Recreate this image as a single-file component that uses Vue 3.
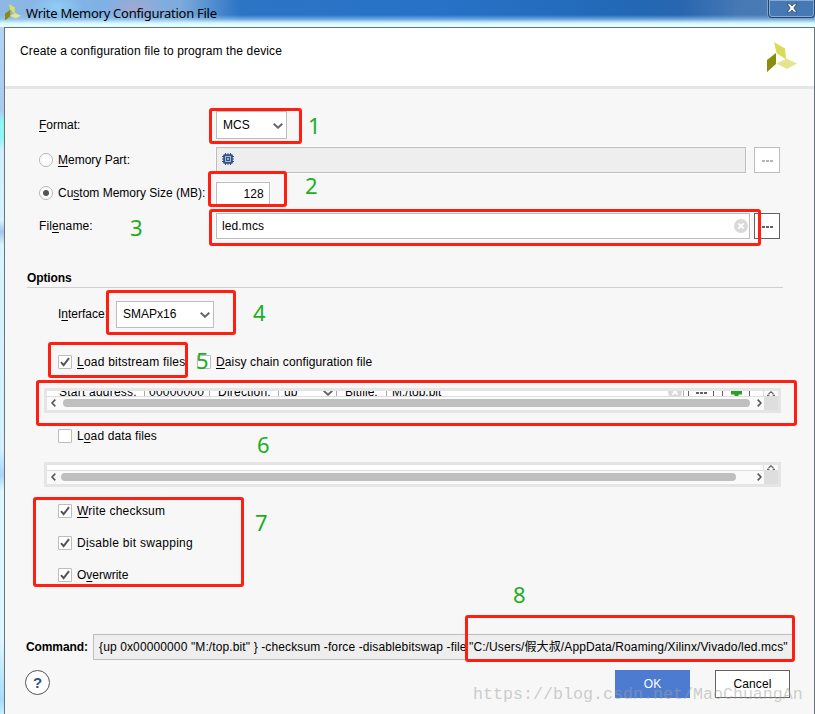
<script setup>
const checks = [
  { pre: '', key: 'W', post: 'rite checksum', cls: 'sp2' },
  { pre: 'D', key: 'i', post: 'sable bit swapping', cls: 'sp3' },
  { pre: 'O', key: 'v', post: 'erwrite', cls: '' },
]
const marks = [1, 2, 3, 4, 5, 6, 7, 8]
</script>

<template>
  <div class="window">
    <header class="titlebar">
      <svg class="mini" viewBox="0 0 30 30"><path d="M7 0l11 6 1 13-9-8z" fill="#dfdf58"/><path d="M0 18l10-7v12l-10 8z" fill="#8c8c0b"/><path d="M9 22l10-5 11 5-10 5z" fill="#e4e58f"/></svg>
      <span class="title">Write Memory Configuration File</span>
      <div class="close">
        <svg width="12" height="10" viewBox="0 0 12 10"><path d="M1 .8h3.2L6 3l1.800-2.200H11L7.800 5l3.200 4.200H7.800L6 7 4.200 9.200H1L4.200 5z" fill="#fff" stroke="#3a4a68" stroke-width=".9"/></svg>
      </div>
    </header>
    <main class="body">
      <section class="intro">
        <span class="sp1">Create a configuration file to program the device</span>
        <svg class="logo" viewBox="0 0 30 30"><path d="M7 0l11 6.500 1 11-9.500-6.500z" fill="#d9dc55"/><path d="M0 18l9-7v11l-9 8z" fill="#8c8c0b"/><path d="M9.500 21.500l10-5 10.500 5-10 5.500z" fill="#e4e58f"/></svg>
      </section>

      <div class="row r1">
        <label class="lead"><u>F</u>ormat:</label>
        <div class="combo mcs">MCS<svg class="chev" viewBox="0 0 10 6"><path d="M.7.8L5 4.700 9.300.8" /></svg></div>
      </div>
      <div class="row r2">
        <label class="lead"><i class="radio"></i><span><u>M</u>emory Part:</span></label>
        <div class="field disabled">
          <svg width="12" height="12" viewBox="0 0 12 12"><path d="M3.500 0v12M6 0v12M8.500 0v12M0 3.500h12M0 6h12M0 8.500h12" stroke="#2f5288" stroke-width="1"/><rect x="1.200" y="1.200" width="9.600" height="9.600" rx="1" fill="#2f5288"/><rect x="3.500" y="3.500" width="5" height="5" fill="#2f5288" stroke="#b9c8de" stroke-width=".9"/><rect x="5" y="5" width="2" height="2" fill="#9fb3d0"/></svg>
        </div>
        <div class="browse off"><b></b><b></b><b></b></div>
      </div>
      <div class="row r3">
        <label class="lead"><i class="radio on"></i><span class="cms">Cu<u>s</u>tom Memory Size (MB):</span></label>
        <div class="field size">128</div>
      </div>
      <div class="row r4">
        <label class="lead sp1">Fil<u>e</u>name:</label>
        <div class="field file"><span class="sp1">led.mcs</span><svg width="14" height="14" viewBox="0 0 14 14"><circle cx="7" cy="7" r="7" fill="#d9d9d9"/><path d="M4.300 4.300l5.400 5.400M9.700 4.300l-5.400 5.400" stroke="#fff" stroke-width="1.800"/></svg></div>
        <div class="browse"><b></b><b></b><b></b></div>
      </div>

      <h2>Options</h2>
      <div class="row iface">
        <label>I<u>n</u>terface:</label>
        <div class="combo smap">SMAPx16<svg class="chev" viewBox="0 0 10 6"><path d="M.7.8L5 4.700 9.300.8" /></svg></div>
      </div>
      <div class="row bits">
        <i class="box"><svg viewBox="0 0 12 12"><path d="M2 6.200l2.600 3L10 2.200" /></svg></i>
        <span class="lbs sp2"><u>L</u>oad bitstream files</span>
        <i class="box"></i>
        <span class="sp1"><u>D</u>aisy chain configuration file</span>
      </div>

      <div class="pane">
        <div class="top">
          <div class="view">
            <div class="entry">
              <span class="e1 sp2">Start address:</span><span class="cell e2 sp2">00000000</span>
              <span class="e3 sp2">Direction:</span><span class="cell e4">up<svg class="chev" viewBox="0 0 10 6"><path d="M.7.8L5 4.700 9.300.8" /></svg></span>
              <span class="e5">Bitfile:</span><span class="cell e6">M:/top.bit<svg width="14" height="14" viewBox="0 0 14 14"><circle cx="7" cy="7" r="7" fill="#d9d9d9"/><path d="M4.300 4.300l5.400 5.400M9.700 4.300l-5.400 5.400" stroke="#fff" stroke-width="1.800"/></svg></span>
              <span class="browse e7"><b></b><b></b><b></b></span>
              <span class="browse e8"><svg width="11" height="11" viewBox="0 0 11 11"><path d="M5.500 0v11M0 5.500h11" stroke="#27a227" stroke-width="4"/></svg></span>
            </div>
          </div>
          <svg class="up" viewBox="0 0 8 5"><path d="M1.500 3L4 .9l2.500 2.100M0 4.400h2.400M5.600 4.400H8" /></svg>
        </div>
        <div class="bottom">
          <div class="track"><svg viewBox="0 0 5 8"><path d="M4.300.6L1 4l3.300 3.400" /></svg><div class="thumb t1"></div><svg viewBox="0 0 5 8"><path d="M.7.6L4 4 .7 7.400" /></svg></div>
          <div class="corner"></div>
        </div>
      </div>

      <div class="row data"><i class="box"></i><span class="sp1">L<u>o</u>ad data files</span></div>

      <div class="pane second">
        <div class="top">
          <div class="view"></div>
          <svg class="up" viewBox="0 0 8 5"><path d="M1.500 3L4 .9l2.500 2.100M0 4.400h2.400M5.600 4.400H8" /></svg>
        </div>
        <div class="bottom">
          <div class="track"><svg viewBox="0 0 5 8"><path d="M4.300.6L1 4l3.300 3.400" /></svg><div class="thumb t2"></div><svg viewBox="0 0 5 8"><path d="M.7.6L4 4 .7 7.400" /></svg></div>
          <div class="corner"></div>
        </div>
      </div>

      <div class="checks">
        <div v-for="c in checks" :key="c.post" class="row check">
          <i class="box"><svg viewBox="0 0 12 12"><path d="M2 6.200l2.600 3L10 2.200" /></svg></i>
          <span :class="c.cls">{{ c.pre }}<u>{{ c.key }}</u>{{ c.post }}</span>
        </div>
      </div>

      <div class="command">
        <strong>Command:</strong>
        <div class="cmd sp1"><span class="c1">{up 0x00000000 "M:/top.bit" } -checksum -force -disablebitswap -file</span><span class="c2">"C:/Users/<span class="cjk">假大叔</span>/AppData/Roaming/Xilinx/Vivado/led.mcs"</span></div>
      </div>
      <footer>
        <div class="help">?</div>
        <div class="btn ok">OK</div>
        <div class="btn cancel sp1">Cancel</div>
      </footer>
    </main>

    <template v-for="n in marks" :key="n">
      <div :class="['frame', 'f' + n]"></div>
      <span :class="['num', 'n' + n]">{{ n }}</span>
    </template>
    <div class="watermark">https://blog.csdn.net/MaoChuangAn</div>
  </div>
</template>

<style>
body { margin: 0; overflow: hidden; }
</style>

<style scoped>
* { box-sizing: border-box; }
.window {
  position: relative; width: 815px; height: 714px; overflow: hidden;
  display: flex; flex-direction: column;
  font: 12px/14px "Liberation Sans", Arial, sans-serif; color: #000;
  background: linear-gradient(#b8d8f4 0, #a9c9ef 110px, #8ff6f4 122px, #8ff6f4 138px, #cfeefd 150px, #d8f2ff 220px, #a3c4ea 232px, #d9f3ff 245px, #d4efff 450px, #a7d4f8 475px, #dff6ff 490px, #dff6ff 640px, #a4dcfb 700px, #c9effc);
}
svg { display: block; flex: none; }
u { text-decoration: underline; text-decoration-thickness: 1px; text-underline-offset: 2px; text-decoration-skip-ink: none; }
.sp1 { letter-spacing: .12px; }
.sp2 { letter-spacing: .22px; }
.sp3 { letter-spacing: .3px; }
.titlebar {
  height: 27px; flex: none; display: flex; align-items: flex-start;
  background:
    linear-gradient(transparent 15px, rgba(150,200,240,.6) 19px, #d6f5ff 23px, #e4ffff 25px),
    radial-gradient(ellipse 26px 14px at 57px 7px, rgba(150,215,255,.7), transparent),
    radial-gradient(ellipse 32px 16px at 135px 8px, rgba(180,165,200,.65), transparent),
    linear-gradient(90deg, #8db8e4 0, #7eb2e6 100px, #7dabdc 180px, #2c74c4 240px, #2873c8 430px, #2269b7 620px, #2866b0 680px, #4779b4 740px, #4c7db5);
}
.mini { width: 16px; height: 16px; margin: 4px 0 0 5px; }
.title { font: 13px/18px "Noto Sans", sans-serif; margin: 4px 0 0 5px; width: 196px; white-space: nowrap; letter-spacing: -.27px; }
.close {
  width: 47px; height: 18px; margin-left: auto; display: flex; justify-content: center; padding-top: 3px;
  border: 1px solid #24456f; border-top: 0; border-radius: 0 0 4px 4px; box-shadow: inset 0 0 0 1px #87aad0, 0 0 0 1px #7ba3cd;
  background: #4679b3;
}
.body {
  flex: 1; min-height: 0; margin-left: 4px; display: flex; flex-direction: column;
  border: 1px solid #687576; border-bottom: 0; background: #f7f7f7;
}
.intro { height: 61px; flex: none; background: #fff; border-bottom: 3px solid #e5e5e5; display: flex; justify-content: space-between; padding: 16px 17px 0 15px; }
.logo { width: 30px; height: 30px; margin-top: -2px; }
.row { display: flex; align-items: center; flex: none; white-space: nowrap; }
.lead { width: 177px; display: flex; align-items: center; white-space: pre; }
.r1 { height: 36px; margin-top: 18px; padding-left: 34px; }
.r2 { height: 34px; padding-left: 34px; }
.r3 { height: 32px; padding-left: 34px; }
.r4 { height: 34px; padding-left: 34px; }
.radio { width: 14px; height: 14px; border: 1px solid #b5b5b5; border-radius: 50%; background: #fff; margin-right: 5px; display: flex; align-items: center; justify-content: center; flex: none; }
.radio.on::after { content: ""; width: 6px; height: 6px; border-radius: 50%; background: #555; }
.combo { height: 28px; border: 1px solid #bdbdbd; background: #fff; display: flex; align-items: center; justify-content: space-between; padding: 0 3px 0 6px; }
.mcs { width: 71px; }
.smap { width: 98px; height: 27px; }
.chev { width: 10px; height: 6px; fill: none; stroke: #666; stroke-width: 2; margin-top: 2px; }
.field { height: 26px; border: 1px solid #bdbdbd; background: #fff; display: flex; align-items: center; box-shadow: 0 0 0 1px #fcfcfc; }
.disabled { width: 530px; background: #eee; padding: 0 0 2px 5px; }
.size { width: 54px; height: 24px; margin-top: 1px; justify-content: flex-end; padding-right: 5px; letter-spacing: .2px; }
.file { width: 534px; padding: 0 1px 0 5px; justify-content: space-between; }
.browse { width: 26px; height: 26px; margin-left: 4px; border: 1px solid #626262; background: #fff; display: flex; align-items: center; justify-content: center; gap: 1px; padding-top: 2px; flex: none; }
.browse b { width: 3px; height: 2px; background: #626262; }
.browse.off { border-color: #bdbdbd; margin-left: 8px; }
.off b { background: #b5b5b5; }
h2 { font-size: 12px; line-height: 14px; height: 19px; flex: none; margin: 26px 31px 0 22px; padding-top: 2px; border-bottom: 1px solid #cfcfcf; letter-spacing: -.1px; }
.iface { height: 52px; padding-left: 53px; }
.iface label { width: 58px; }
.bits { height: 44px; padding-left: 53px; }
.box { width: 14px; height: 14px; border: 1px solid #bdbdbd; border-radius: 1px; background: #fff; margin-right: 5px; flex: none; }
.box svg { width: 12px; height: 12px; fill: none; stroke: #555; stroke-width: 2; }
.lbs { width: 120px; }
.pane { width: 737px; height: 25px; flex: none; margin: 4px 0 0 39px; border: 3px solid #e5e5e5; background: #fafafa; }
.second { margin-top: 3px; }
.top { height: 6px; display: flex; border-bottom: 1px solid #dedede; overflow: hidden; }
.view { width: 717px; height: 5px; overflow: hidden; background: #fff; border-right: 1px solid #dedede; }
.up { width: 8px; height: 5px; margin-left: 3px; fill: none; stroke: #666; stroke-width: 1.200; }
.entry { display: flex; align-items: center; height: 26px; margin-top: -12px; padding-left: 12px; white-space: nowrap; }
.cell { height: 26px; border: 1px solid #aaa; display: flex; align-items: center; justify-content: space-between; padding-left: 4px; flex: none; }
.e1 { width: 85px; }
.e2 { width: 66px; }
.e3 { width: 60px; margin-left: 8px; }
.e4 { width: 59px; padding: 0 3px 0 5px; }
.e5 { width: 41px; margin-left: 8px; }
.e6 { width: 298px; padding: 0 1px 0 5px; }
.e8 { width: 28px; margin-left: 8px; padding: 0; }
.bottom { display: flex; height: 13px; }
.track { width: 717px; height: 12px; display: flex; align-items: center; justify-content: space-between; padding: 0 2px 0 4px; }
.track svg { width: 5px; height: 8px; fill: none; stroke: #555; stroke-width: 1.600; }
.thumb { height: 8px; border-radius: 4px; background: #bfbfbf; }
.t1 { width: 687px; }
.t2 { width: 675px; margin: 0 16px 0 0; }
.corner { width: 14px; height: 13px; background: #dedede; }
.data { height: 46px; padding-left: 53px; }
.checks { margin-top: 8px; }
.check { height: 32px; padding-left: 53px; }
.command { height: 26px; flex: none; margin-top: 43px; padding-left: 21px; display: flex; align-items: center; }
.command strong { width: 67px; letter-spacing: -.1px; }
.cmd { width: 699px; height: 26px; border: 1px solid #bdbdbd; border-right: 0; background: #eee; display: flex; align-items: center; padding-left: 5px; white-space: nowrap; }
.c1 { width: 370px; }
.cjk { font-family: "Noto Sans CJK SC", sans-serif; font-size: 12px; line-height: 12px; }
footer { display: flex; padding: 10px 0 0 20px; align-items: flex-start; flex: none; }
.help { width: 25px; height: 25px; border: 1px solid #555; border-radius: 50%; background: #fff; color: #2f4f87; font-weight: bold; font-size: 15px; display: flex; align-items: center; justify-content: center; }
.btn { width: 75px; height: 28px; display: flex; align-items: center; justify-content: center; }
.ok { background: #4d7bd0; color: #fff; margin-left: 565px; }
.cancel { background: #fff; border: 1px solid #626262; margin-left: 25px; }
/* annotation overlays */
.frame { position: absolute; border: 3px solid #ff1e10; border-radius: 3px; }
.f1 { left: 209px; top: 108px; width: 93px; height: 36px; }
.f2 { left: 208px; top: 171px; width: 79px; height: 36px; }
.f3 { left: 209px; top: 209px; width: 552px; height: 37px; }
.f4 { left: 106px; top: 290px; width: 130px; height: 45px; }
.f5 { left: 48px; top: 342px; width: 140px; height: 36px; }
.f6 { left: 36px; top: 380px; width: 761px; height: 46px; }
.f7 { left: 33px; top: 497px; width: 211px; height: 90px; }
.f8 { left: 465px; top: 615px; width: 330px; height: 47px; }
.num { position: absolute; font: 22px/26px "Noto Sans", sans-serif; color: #1cae1c; }
.n1 { left: 308px; top: 112px; }
.n2 { left: 305px; top: 172px; }
.n3 { left: 130px; top: 214px; }
.n4 { left: 253px; top: 299px; }
.n5 { left: 196px; top: 347px; }
.n6 { left: 257px; top: 431px; }
.n7 { left: 255px; top: 509px; }
.n8 { left: 513px; top: 581px; }
.watermark { position: absolute; left: 473px; top: 685px; font: 16.670px/20px "Liberation Mono", monospace; color: rgba(160,160,155,.5); white-space: nowrap; }
</style>
